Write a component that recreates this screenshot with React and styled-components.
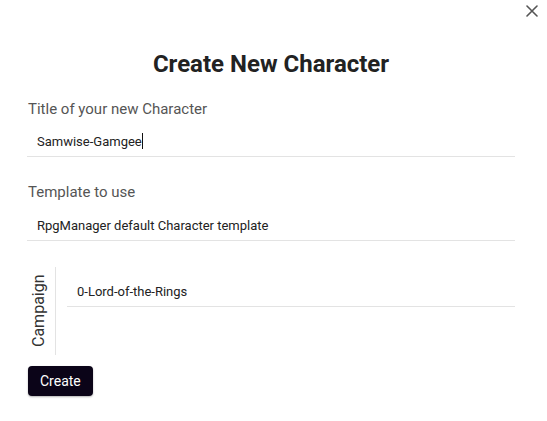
import React from 'react'
import styled, { createGlobalStyle } from 'styled-components'

const GlobalStyle = createGlobalStyle`
  html, body {
    margin: 0;
    background: #ffffff;
    font-family: Roboto, Inter, sans-serif;
    color: #222222;
  }
`

const Modal = styled.div`
  position: relative;
  width: 547px;
  height: 421px;
  box-sizing: border-box;
  padding: 49px 32px 0 27px;
  background: #ffffff;
`

const Close = styled.button`
  position: absolute;
  top: 3px;
  right: 7px;
  width: 16px;
  height: 16px;
  padding: 0;
  border: 0;
  background: none;
  color: #555555;
  display: flex;
  align-items: center;
  justify-content: center;
`

const Title = styled.h2`
  margin: 0 0 21px;
  font-size: 24px;
  line-height: 30px;
  font-weight: 700;
  text-align: center;
  color: #222222;
`

const Label = styled.div`
  font-size: 15px;
  line-height: 18px;
  color: #555555;
  margin-bottom: ${p => p.$gap}px;
  padding-left: 1px;
`

const Field = styled.div`
  margin-bottom: 26px;
`

const Input = styled.div`
  height: 30px;
  display: flex;
  align-items: center;
  padding: 0 10px;
  font-size: 13px;
  color: #222222;
  border-bottom: 1px solid #e3e3e3;
`

const Caret = styled.span`
  display: inline-block;
  width: 1px;
  height: 16px;
  background: #111111;
`

const Group = styled.div`
  display: flex;
  align-items: stretch;
  height: 88px;
  margin-bottom: 11px;
`

const SideLabel = styled.div`
  writing-mode: vertical-rl;
  transform: rotate(180deg);
  font-size: 16px;
  color: #333333;
  width: 22px;
  margin-right: 6px;
  display: flex;
  align-items: center;
  justify-content: center;
`

const GroupBody = styled.div`
  flex: 1;
  padding: 9px 0 0 11px;
  border-left: 1px solid #e3e3e3;
`

const Button = styled.button`
  height: 30px;
  padding: 0 12px;
  margin-left: 1px;
  border: 0;
  border-radius: 4px;
  background: #0b0418;
  color: #ffffff;
  font-family: Roboto, Inter, sans-serif;
  font-size: 14px;
  box-shadow: 0 1px 2px rgba(0, 0, 0, 0.3);
`

export default function App() {
  return (
    <>
      <GlobalStyle />
      <Modal>
        <Close aria-label="Close">
          <svg width="12" height="12" viewBox="0 0 12 12">
            <path d="M1 1 L11 11 M11 1 L1 11" stroke="currentColor" strokeWidth="1.6" strokeLinecap="round" />
          </svg>
        </Close>
        <Title>Create New Character</Title>
        <Field>
          <Label $gap={8}>Title of your new Character</Label>
          <Input>
            Samwise-Gamgee
            <Caret />
          </Input>
        </Field>
        <Field>
          <Label $gap={9}>Template to use</Label>
          <Input>RpgManager default Character template</Input>
        </Field>
        <Group>
          <SideLabel>Campaign</SideLabel>
          <GroupBody>
            <Input>0-Lord-of-the-Rings</Input>
          </GroupBody>
        </Group>
        <Button>Create</Button>
      </Modal>
    </>
  )
}
